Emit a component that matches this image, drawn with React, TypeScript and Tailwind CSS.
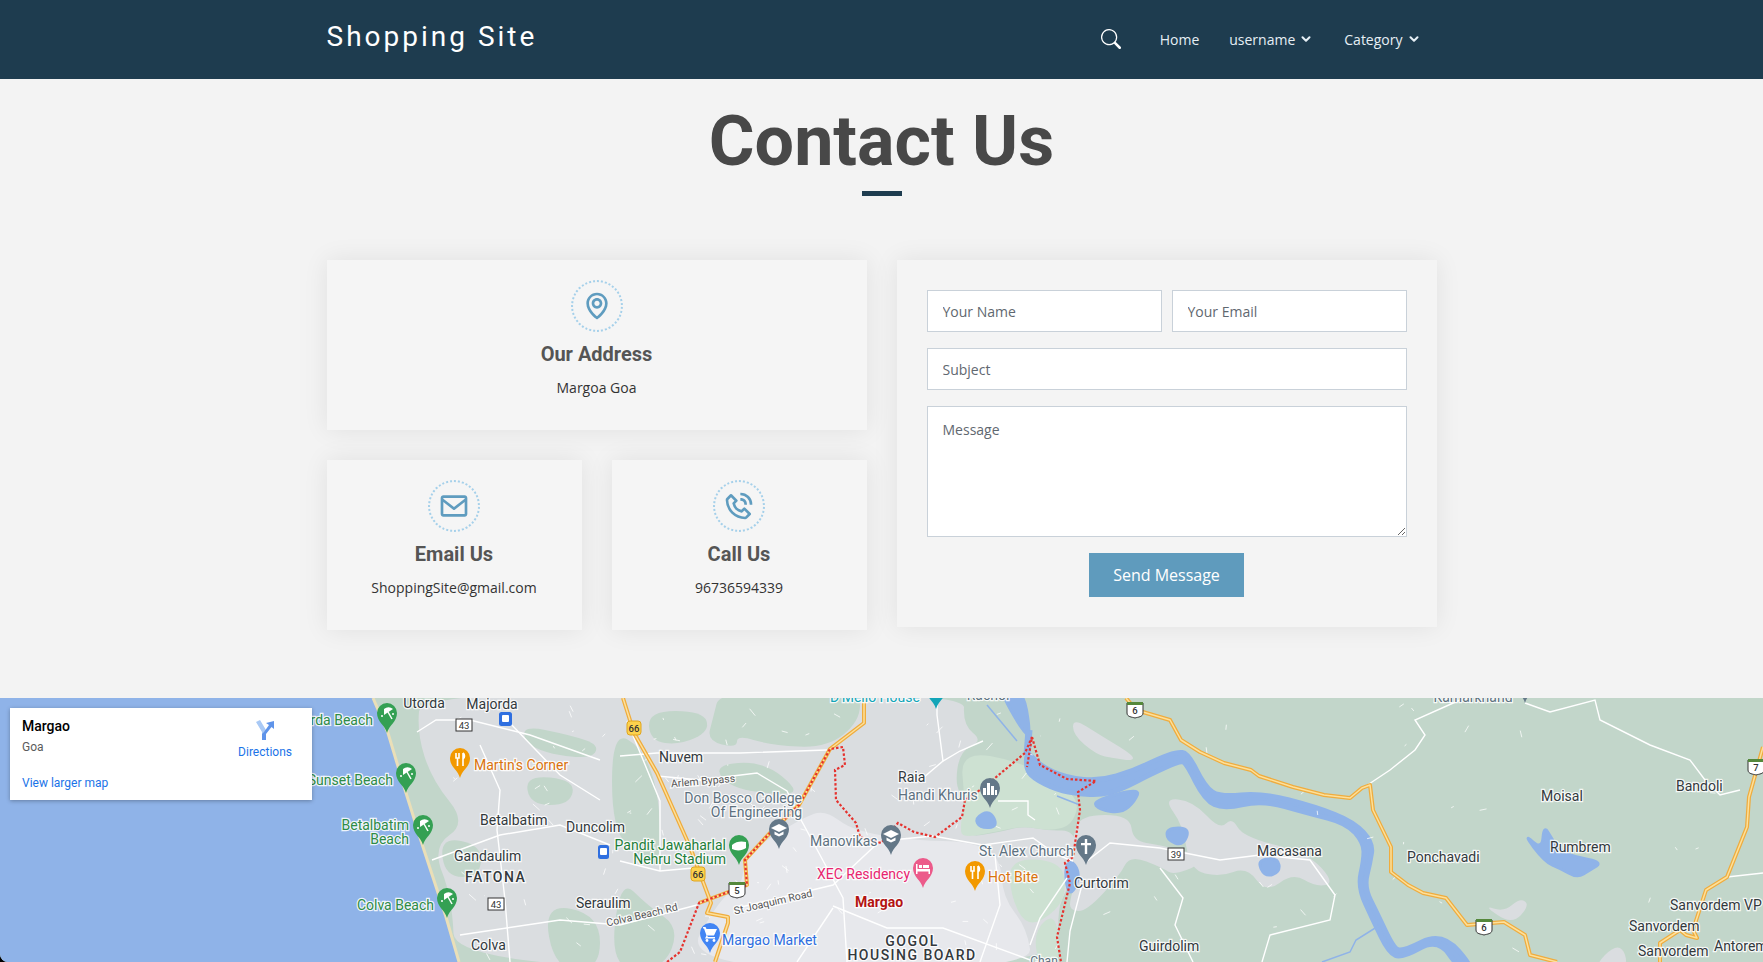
import { ChevronDown } from "lucide-react";
import { BiEnvelope, BiMap, BiPhoneCall } from "react-icons/bi";
import { BsSearch } from "react-icons/bs";

const sans = "font-['Open_Sans',sans-serif]";
const roboto = "font-['Roboto',sans-serif]";

const cardShadow = "shadow-[0_0_24px_0_rgba(0,0,0,0.08)]";

function Header() {
  return (
    <header className="h-[79px] bg-[#1e3c4f] text-white">
      <div className="mx-auto flex h-full w-[1110px] items-start justify-between">
        <a className={`${roboto} mt-[17px] text-[28px] leading-[40px] tracking-[3px]`}>Shopping Site</a>
        <nav className={`${sans} mr-[16px] mt-[28px] flex h-[22px] items-center text-[14px] font-medium text-[#e6eff5]`}>
          <BsSearch className="mr-[39px] text-white" size={20} />
          <span className="mr-[30px]">Home</span>
          <span className="mr-[31px] flex items-center gap-[4px]">
            username <ChevronDown size={14} strokeWidth={3.5} />
          </span>
          <span className="flex items-center gap-[4px]">
            Category <ChevronDown size={14} strokeWidth={3.5} />
          </span>
        </nav>
      </div>
    </header>
  );
}

function InfoCard({ icon, title, text }: { icon: React.ReactNode; title: string; text: string }) {
  return (
    <div className={`flex h-[170px] flex-col items-center bg-[#f5f5f5] pt-[20px] ${cardShadow}`}>
      <div className="flex h-[52px] w-[52px] items-center justify-center rounded-full border-2 border-dotted border-[#a5d0ea] text-[#5f9cbf]">
        {icon}
      </div>
      <h3 className={`${roboto} mt-[10px] text-[20px] font-bold leading-[24px] text-[#555]`}>{title}</h3>
      <p className={`${sans} mt-[10px] text-[14px] leading-[24px] text-[#333]`}>{text}</p>
    </div>
  );
}

const inputCls = `${sans} h-[42px] w-full border border-[#c9d1d9] bg-white px-[15px] text-[14px] text-[#495057] placeholder:text-[#5f6870] outline-none`;

function ContactForm() {
  return (
    <form className={`flex h-[367px] flex-col gap-[16px] bg-[#f4f4f4] p-[30px] ${cardShadow}`}>
      <div className="grid grid-cols-2 gap-[10px]">
        <input className={inputCls} placeholder="Your Name" />
        <input className={inputCls} placeholder="Your Email" />
      </div>
      <input className={inputCls} placeholder="Subject" />
      <textarea
        className={`${sans} h-[131px] w-full border border-[#c9d1d9] bg-white px-[15px] py-[12px] text-[14px] leading-[21px] placeholder:text-[#5f6870] outline-none`}
        placeholder="Message"
      />
      <button type="button" className={`${sans} mx-auto h-[44px] w-[155px] bg-[#5f9bbd] text-[16px] font-medium text-white`}>
        Send Message
      </button>
    </form>
  );
}

const GRAY = "#5d7180";
const DARK = "#33393d";
const GREEN = "#2e8b47";
const GREEN2 = "#1e7e3a";
const ORANGE = "#d9730d";

type Label = { x: number; y: number; t: string; c?: string; a?: "start" | "end" | "middle"; s?: number; w?: number; ls?: number; r?: number };

const labels: Label[] = [
  { x: 424, y: 703, t: "Utorda", a: "middle" },
  { x: 492, y: 704, t: "Majorda", a: "middle" },
  { x: 373, y: 720, t: "Utorda Beach", c: GREEN, a: "end" },
  { x: 393, y: 780, t: "Sunset Beach", c: GREEN, a: "end" },
  { x: 409, y: 825, t: "Betalbatim", c: GREEN, a: "end" },
  { x: 409, y: 839, t: "Beach", c: GREEN, a: "end" },
  { x: 434, y: 905, t: "Colva Beach", c: GREEN, a: "end" },
  { x: 474, y: 765, t: "Martin's Corner", c: ORANGE },
  { x: 480, y: 820, t: "Betalbatim" },
  { x: 566, y: 827, t: "Duncolim" },
  { x: 454, y: 856, t: "Gandaulim" },
  { x: 465, y: 877, t: "FATONA", w: 500, ls: 1.5 },
  { x: 576, y: 903, t: "Seraulim" },
  { x: 471, y: 945, t: "Colva" },
  { x: 659, y: 757, t: "Nuvem" },
  { x: 703, y: 781, t: "Arlem Bypass", a: "middle", s: 10.5, r: -5, c: "#555" },
  { x: 802, y: 798, t: "Don Bosco College", c: GRAY, a: "end" },
  { x: 802, y: 812, t: "Of Engineering", c: GRAY, a: "end" },
  { x: 726, y: 845, t: "Pandit Jawaharlal", c: GREEN2, a: "end" },
  { x: 726, y: 859, t: "Nehru Stadium", c: GREEN2, a: "end" },
  { x: 810, y: 841, t: "Manovikas", c: GRAY },
  { x: 898, y: 777, t: "Raia" },
  { x: 898, y: 795, t: "Handi Khuris", c: GRAY },
  { x: 979, y: 851, t: "St. Alex Church", c: GRAY },
  { x: 1074, y: 883, t: "Curtorim" },
  { x: 817, y: 874, t: "XEC Residency", c: "#e8256f" },
  { x: 988, y: 877, t: "Hot Bite", c: ORANGE },
  { x: 855, y: 902, t: "Margao", c: "#b31412", w: 700 },
  { x: 912, y: 941, t: "GOGOL", a: "middle", w: 500, ls: 1.5 },
  { x: 912, y: 955, t: "HOUSING BOARD", a: "middle", w: 500, ls: 1.5 },
  { x: 722, y: 940, t: "Margao Market", c: "#2f6fe0" },
  { x: 773, y: 902, t: "St Joaquim Road", a: "middle", s: 10.5, r: -13, c: "#555" },
  { x: 642, y: 915, t: "Colva Beach Rd", a: "middle", s: 10.5, r: -13, c: "#555" },
  { x: 1139, y: 946, t: "Guirdolim" },
  { x: 875, y: 697, t: "D'Mello House", c: "#12a5b8", a: "middle" },
  { x: 988, y: 695, t: "Rachol", a: "middle", c: GRAY },
  { x: 1473, y: 697, t: "Kamarkhand", a: "middle", c: GRAY },
  { x: 1044, y: 961, t: "Chan", a: "middle", s: 12, c: GRAY },
  { x: 1257, y: 851, t: "Macasana" },
  { x: 1407, y: 857, t: "Ponchavadi" },
  { x: 1541, y: 796, t: "Moisal" },
  { x: 1550, y: 847, t: "Rumbrem" },
  { x: 1676, y: 786, t: "Bandoli" },
  { x: 1670, y: 905, t: "Sanvordem VP" },
  { x: 1629, y: 926, t: "Sanvordem" },
  { x: 1638, y: 951, t: "Sanvordem" },
  { x: 1714, y: 946, t: "Antorem" },
];

// closed organic outline: each point pulls a quadratic curve through the midpoints
function blob(pts: number[][]) {
  const mid = (a: number[], b: number[]) => `${(a[0] + b[0]) / 2} ${(a[1] + b[1]) / 2}`;
  let d = `M${mid(pts[pts.length - 1], pts[0])}`;
  pts.forEach((p, i) => {
    d += `Q${p[0]} ${p[1]} ${mid(p, pts[(i + 1) % pts.length])}`;
  });
  return `${d}Z`;
}

const highways = [
  "M623 698L634 733L657 773L690 847L711 903L707 913L728 917L728 923L715 962",
  "M864 698L864 723L830 749L799 805L768 835L745 860L747 885L699 903",
  "M1126 698L1136 710L1170 720L1181 740L1200 752L1224 763L1251 770L1259 776L1293 787L1324 795L1350 798L1362 788L1370 785L1373 810L1391 847L1391 872L1408 885L1423 893L1446 898L1467 925L1504 922L1525 935L1530 955L1557 962",
  "M1763 747L1749 797L1747 827L1727 877L1706 890L1693 930L1697 938L1686 935L1680 930L1660 943L1660 962",
];

const redLines = [
  "M667 962L680 952L699 903L747 885L745 860L768 835L799 805L830 749L843 747L845 765L835 770L836 800L856 823L860 837L881 843L898 823L914 832L935 837L962 817L965 800L983 788L1025 753L1032 737L1027 767",
  "M1032 737L1040 765L1067 779L1096 781L1078 792L1080 810L1073 857L1065 863L1070 883L1057 937L1061 962",
];

const roads = [
  "M417 732L436 720L470 720L530 735L600 760",
  "M506 719L560 775L600 800",
  "M480 745L500 790L497 830L505 900L510 962",
  "M432 860L500 835L560 825L610 845",
  "M460 935L560 920L620 925L697 905",
  "M627 721L660 801L660 871",
  "M620 756L657 753L740 753L827 750",
  "M657 776L700 780L757 773L787 791L800 818L820 855L843 898L847 962",
  "M620 861L660 871L693 868",
  "M880 841L833 885L737 908",
  "M833 906L887 928L943 928L1033 961",
  "M833 908L797 962",
  "M937 698L937 715L943 761L960 751L983 741",
  "M923 778L943 761",
  "M881 841L933 836L983 845L1033 838L1057 855L1073 861",
  "M1087 861L1110 843L1160 848L1220 860L1260 855L1310 860L1335 895L1330 920L1270 935L1262 962",
  "M1160 868L1183 898L1175 925L1193 962",
  "M1067 878L1040 918L1030 945",
  "M1082 885L1070 931L1067 962",
  "M998 801L1028 801L1028 815L1035 820",
  "M995 855L1000 905L980 962",
  "M1360 790L1390 770L1415 750L1425 735L1415 720L1460 700",
  "M1525 703L1550 712L1595 700L1600 720L1650 745L1690 760L1705 780L1720 795L1740 790",
  "M1727 877L1763 873",
];

// short stubs of side streets
const stubs: number[][] = [];
let seed = 17;
const rnd = () => {
  seed = (seed * 1103 + 12345) % 65536;
  return seed / 65536;
};
for (let i = 0; i < 150; i++) {
  const east = i % 5 === 0;
  stubs.push([
    east ? 1100 + rnd() * 640 : 440 + rnd() * 620,
    705 + rnd() * 250,
    (rnd() - 0.5) * 14,
    (rnd() - 0.5) * 14,
  ]);
}

type PinT = { x: number; y: number; c: string; g: "beach" | "food" | "school" | "stadium" | "city" | "cross" | "bed" | "cart" | "none" };

const pins: PinT[] = [
  { x: 387, y: 733, c: "#34a053", g: "beach" },
  { x: 406, y: 793, c: "#34a053", g: "beach" },
  { x: 423, y: 845, c: "#34a053", g: "beach" },
  { x: 447, y: 918, c: "#34a053", g: "beach" },
  { x: 460, y: 778, c: "#f29900", g: "food" },
  { x: 779, y: 849, c: "#647888", g: "school" },
  { x: 891, y: 855, c: "#647888", g: "school" },
  { x: 739, y: 865, c: "#34a053", g: "stadium" },
  { x: 990, y: 808, c: "#647888", g: "city" },
  { x: 1086, y: 865, c: "#647888", g: "cross" },
  { x: 923, y: 888, c: "#ec5a8a", g: "bed" },
  { x: 975, y: 891, c: "#f29900", g: "food" },
  { x: 710, y: 953, c: "#4285f4", g: "cart" },
  { x: 936, y: 709, c: "#12a5b8", g: "none" },
  { x: 1525, y: 703, c: "#647888", g: "none" },
];

function PinGlyph({ g }: { g: PinT["g"] }) {
  if (g === "beach")
    return (
      <g stroke="#fff" fill="none" strokeWidth="1.5">
        <path d="M-3 -18L6 -24A7 7 0 0 0 -3 -24Z" fill="#fff" stroke="none" />
        <path d="M1 -21L5 -14" />
        <circle cx="-5" cy="-17" r="1" fill="#fff" stroke="none" />
        <circle cx="6" cy="-19" r="1" fill="#fff" stroke="none" />
      </g>
    );
  if (g === "food")
    return (
      <g stroke="#fff" fill="none" strokeWidth="1.6">
        <path d="M-4 -25V-20H-1V-25M-2.5 -20V-12" />
        <path d="M3 -25V-12M3 -25C5 -24 5 -20 3 -19" />
      </g>
    );
  if (g === "school")
    return (
      <g fill="#fff">
        <path d="M0 -25L8 -21L0 -17L-8 -21Z" />
        <path d="M-4.5 -17.5L0 -15L4.5 -17.5V-14.5L0 -12.5L-4.5 -14.5Z" />
      </g>
    );
  if (g === "stadium")
    return <path d="M-7 -20C-3 -24 3 -24 7 -23V-17C3 -14 -3 -14 -7 -16Z" fill="#fff" />;
  if (g === "city")
    return <path d="M-7 -13V-20H-4V-13ZM-3 -13V-25H0V-13ZM1 -13V-22H4V-13ZM5 -13V-18H7V-13Z" fill="#fff" />;
  if (g === "cross") return <path d="M-1.2 -26H1.2V-22H5V-19.8H1.2V-11H-1.2V-19.8H-5V-22H-1.2Z" fill="#fff" />;
  if (g === "bed")
    return (
      <g fill="#fff">
        <path d="M-7 -24H-5.5V-19H7V-14H5.5V-16.5H-5.5V-14H-7Z" />
        <rect x="-4" y="-23" width="3" height="3" />
        <rect x="0" y="-23" width="6" height="3" />
      </g>
    );
  if (g === "cart")
    return (
      <g fill="#fff">
        <path d="M-7 -26H-4.5L-3.5 -24H7L4 -17.5H-3L-2 -16H5V-14.5H-5L-3.5 -17.5L-6 -24.5H-7Z" />
        <circle cx="-3" cy="-12.5" r="1.4" />
        <circle cx="4" cy="-12.5" r="1.4" />
      </g>
    );
  return null;
}

function Shield({ x, y, t, kind }: { x: number; y: number; t: string; kind: "nh" | "sh" | "us" }) {
  if (kind === "sh")
    return (
      <g>
        <rect x={x - 8} y={y - 6} width="16" height="12" fill="#fff" stroke="#333" />
        <text x={x} y={y + 3.5} textAnchor="middle" fontSize="9.5" fill="#333">{t}</text>
      </g>
    );
  if (kind === "nh")
    return (
      <g>
        <rect x={x - 7} y={y - 7} width="14" height="14" rx="3" fill="#fdd24d" stroke="#e0a520" />
        <text x={x} y={y + 3.5} textAnchor="middle" fontSize="9.5" fontWeight="500" fill="#333">{t}</text>
      </g>
    );
  return (
    <g>
      <path d={`M${x - 8} ${y - 7}H${x + 8}V${y + 3}C${x + 8} ${y + 7} ${x + 3} ${y + 7} ${x} ${y + 8}C${x - 3} ${y + 7} ${x - 8} ${y + 7} ${x - 8} ${y + 3}Z`} fill="#fff" stroke="#333" />
      <rect x={x - 8} y={y - 8} width="16" height="3" fill="#55883b" />
      <text x={x} y={y + 4} textAnchor="middle" fontSize="9.5" fontWeight="500" fill="#333">{t}</text>
    </g>
  );
}

const townAreas = [
  [[421, 690], [417, 733], [432, 780], [467, 823], [432, 847], [452, 897], [455, 970], [1060, 970], [1057, 911], [1067, 888], [1083, 861], [1073, 830], [1050, 831], [1023, 826], [1000, 832], [963, 838], [965, 800], [955, 785], [960, 751], [983, 741], [963, 725], [965, 690]],
  [[1080, 815], [1130, 815], [1133, 841], [1160, 845], [1200, 855], [1200, 865], [1173, 875], [1163, 868], [1130, 855], [1120, 875], [1087, 911], [1070, 911], [1070, 898], [1080, 871], [1067, 861], [1073, 838]],
  [[1073, 718], [1100, 735], [1133, 755], [1133, 761], [1113, 758], [1097, 755], [1073, 735]],
  [[1163, 798], [1193, 801], [1220, 830], [1232, 817], [1243, 837], [1308, 853], [1335, 883], [1316, 887], [1293, 873], [1266, 893], [1247, 867], [1220, 877], [1190, 870], [1183, 825]],
  [[1483, 905], [1512, 925], [1530, 905], [1520, 898], [1504, 912]],
  [[1590, 970], [1620, 940], [1630, 970]],
];

const greenPatches = [
  [[720, 690], [860, 690], [860, 721], [827, 748], [770, 745], [737, 735], [737, 748], [707, 741], [713, 718]],
  [[648, 711], [703, 711], [710, 731], [680, 745], [650, 741]],
  [[713, 765], [763, 761], [800, 791], [780, 795], [730, 788]],
  [[612, 731], [643, 748], [660, 798], [660, 871], [640, 855], [612, 831]],
  [[620, 878], [647, 905], [680, 928], [663, 970], [610, 970]],
  [[520, 725], [570, 735], [600, 745], [590, 760], [530, 750]],
  [[525, 775], [575, 780], [570, 805], [530, 805]],
  [[440, 837], [482, 845], [480, 877], [445, 877]],
  [[543, 903], [600, 915], [600, 970], [555, 970]],
];

const lightGreen = [
  [[960, 751], [1020, 761], [1080, 795], [1073, 825], [1050, 831], [1023, 826], [1000, 831], [963, 838], [960, 828], [965, 800]],
  [[1010, 858], [1060, 861], [1067, 888], [1057, 911], [1027, 928], [1010, 895]],
  [[1033, 931], [1057, 911], [1060, 970], [1040, 970]],
];

const cityCore = [[743, 855], [807, 815], [827, 811], [853, 831], [920, 841], [967, 841], [1000, 855], [1003, 898], [1027, 928], [1033, 970], [680, 970], [720, 898], [743, 885]];

const river = [
  [1027, 751], [1040, 766], [1067, 778], [1100, 781], [1133, 771], [1160, 758], [1177, 752], [1188, 753], [1205, 787], [1220, 797], [1262, 793], [1316, 807], [1354, 822], [1373, 843], [1370, 863], [1364, 887], [1377, 913], [1393, 947], [1402, 952], [1442, 932], [1475, 970],
  [1460, 970], [1438, 938], [1402, 958], [1389, 953], [1373, 920], [1358, 887], [1364, 860], [1364, 843], [1347, 823], [1308, 813], [1262, 800], [1224, 809], [1205, 800], [1186, 763], [1180, 761], [1153, 773], [1120, 790], [1100, 795], [1080, 794], [1057, 790], [1033, 778], [1026, 768],
];

const lakes = [
  [[1000, 690], [1023, 690], [1030, 730], [1027, 736], [1015, 718]],
  [[975, 818], [990, 810], [998, 827], [980, 828]],
  [[1092, 801], [1140, 788], [1135, 801], [1122, 813], [1100, 810]],
  [[1167, 828], [1190, 828], [1183, 846], [1167, 840]],
  [[1065, 865], [1073, 861], [1080, 875], [1073, 893], [1067, 891]],
  [[1257, 860], [1278, 858], [1280, 872], [1265, 877]],
  [[1523, 833], [1542, 850], [1544, 825], [1552, 840], [1565, 855], [1603, 862], [1590, 870], [1577, 878], [1560, 868], [1545, 862]],
];

function MapArt() {
  return (
    <svg className="absolute inset-0 h-full w-full" viewBox="0 698 1763 264" preserveAspectRatio="none" fontFamily="Roboto, sans-serif">
      <rect x="0" y="698" width="1763" height="264" fill="#c2d6ca" />

      <g fill="#dadde0">
        {townAreas.map((p, i) => (
          <path key={i} d={blob(p)} />
        ))}
      </g>
      <g fill="#c2d6ca">
        {greenPatches.map((p, i) => (
          <path key={i} d={blob(p)} />
        ))}
      </g>
      <path d={blob(cityCore)} fill="#e7e8ec" />
      <g fill="#cde1d2">
        {lightGreen.map((p, i) => (
          <path key={i} d={blob(p)} />
        ))}
      </g>

      {/* sea, coast and rivers */}
      <path d="M0 698H373L388 733L406 793L423 847L446 917L459 962H0Z" fill="#8fb3e8" />
      <path d="M373 698L388 733L406 793L423 847L446 917L459 962" fill="none" stroke="#eadfb8" strokeWidth="3" />
      <path d={blob(river)} fill="#8fb3e8" stroke="#8fb3e8" strokeWidth="5" strokeLinejoin="round" />
      <g fill="#8fb3e8" stroke="#8fb3e8" strokeWidth="3" strokeLinejoin="round">
        {lakes.map((p, i) => (
          <path key={i} d={blob(p)} />
        ))}
      </g>
      <g fill="none" stroke="#8fb3e8">
        <path d="M1029 730L1027 755" strokeWidth="7" />
        <path d="M987 705L1017 741" strokeWidth="1.5" />
        <path d="M1057 796L1080 805" strokeWidth="1.5" />
        <path d="M1380 925L1356 940L1350 952L1322 962" strokeWidth="1.5" />
      </g>

      <g fill="none" stroke="#fff" strokeWidth="1.4">
        {roads.map((d) => (
          <path key={d} d={d} />
        ))}
      </g>
      <g fill="none" stroke="#fff" strokeOpacity="0.75" strokeWidth="1">
        {stubs.map((s, i) => (
          <path key={i} d={`M${s[0]} ${s[1]}l${s[2]} ${s[3]}`} />
        ))}
      </g>

      <g fill="none" strokeLinejoin="round">
        {highways.map((d) => (
          <path key={d} d={d} stroke="#efac3e" strokeWidth="4" />
        ))}
        {highways.map((d) => (
          <path key={`${d}-in`} d={d} stroke="#fde09a" strokeWidth="1.5" />
        ))}
      </g>

      <g fill="none" stroke="#e5322e" strokeWidth="2.2" strokeDasharray="2.5 2">
        {redLines.map((d) => (
          <path key={d} d={d} />
        ))}
      </g>

      <Shield x={464} y={725} t="43" kind="sh" />
      <Shield x={496} y={904} t="43" kind="sh" />
      <Shield x={1176} y={854} t="39" kind="sh" />
      <Shield x={634} y={728} t="66" kind="nh" />
      <Shield x={698} y={874} t="66" kind="nh" />
      <Shield x={737} y={890} t="5" kind="us" />
      <Shield x={1135} y={710} t="6" kind="us" />
      <Shield x={1484} y={927} t="6" kind="us" />
      <Shield x={1756} y={767} t="7" kind="us" />

      <g>
        <rect x="499" y="712" width="13" height="14" rx="2.5" fill="#2f6fe0" />
        <rect x="502" y="715" width="7" height="7" rx="1" fill="#fff" />
        <rect x="598" y="845" width="11" height="14" rx="2.5" fill="#2f6fe0" />
        <rect x="600" y="848" width="7" height="7" rx="1" fill="#fff" />
      </g>

      {labels.map((l) => (
        <text
          key={`${l.t}-${l.x}`}
          x={l.x}
          y={l.y}
          textAnchor={l.a ?? "start"}
          dominantBaseline="central"
          fontSize={l.s ?? 14}
          fontWeight={l.w ?? 400}
          letterSpacing={l.ls ?? 0}
          fill={l.c ?? DARK}
          stroke="#fff"
          strokeOpacity="0.85"
          strokeWidth="2.5"
          paintOrder="stroke"
          transform={l.r ? `rotate(${l.r} ${l.x} ${l.y})` : undefined}
        >
          {l.t}
        </text>
      ))}

      {pins.map((p) => (
        <g key={`${p.x}-${p.y}`} transform={`translate(${p.x} ${p.y})`}>
          <path d="M0 0C-2 -8 -10 -11 -10 -20A10 10 0 1 1 10 -20C10 -11 2 -8 0 0Z" fill={p.c} />
          <PinGlyph g={p.g} />
        </g>
      ))}
    </svg>
  );
}

function MapCard() {
  return (
    <div className={`${roboto} absolute left-[10px] top-[10px] flex h-[92px] w-[302px] justify-between bg-white pl-[12px] pr-[20px] shadow-[0_1px_4px_rgba(0,0,0,0.3)]`}>
      <div className="flex flex-col pt-[9px]">
        <div className="text-[14px] font-medium leading-[18px] text-black">Margao</div>
        <div className="mt-[3px] text-[12px] leading-[18px] text-[#5b5b5b]">Goa</div>
        <a className="mt-[19px] text-[12px] leading-[16px] text-[#1a73e8]">View larger map</a>
      </div>
      <div className="flex flex-col items-center pt-[12px]">
        <svg width="20" height="20" viewBox="0 0 20 20">
          <path d="M1 2L5 0L11 10V20H7V12Z" fill="#a9c9f5" />
          <path d="M9 12L14 5L11 3L19 1V9L16.5 7L11 14V20H7V14Z" fill="#5f94ea" />
        </svg>
        <span className="mt-[4px] text-[12px] leading-[16px] text-[#1a73e8]">Directions</span>
      </div>
    </div>
  );
}

export default function App() {
  return (
    <div className="h-[962px] w-full overflow-hidden bg-black">
      <Header />
      <main className="h-[619px] bg-[#f3f3f3] pt-[20px]">
        <div className="flex flex-col items-center">
          <h2 className={`${roboto} text-[70px] font-bold leading-[84px] text-[#484848]`}>Contact Us</h2>
          <div className="mt-[8px] h-[5px] w-[40px] bg-[#1e3c4f]" />
        </div>
        <div className="mx-auto mt-[64px] grid w-[1110px] grid-cols-2 gap-[30px]">
          <div className="flex flex-col gap-[30px]">
            <InfoCard icon={<BiMap size={32} />} title="Our Address" text="Margoa Goa" />
            <div className="grid grid-cols-2 gap-[30px]">
              <InfoCard icon={<BiEnvelope size={32} />} title="Email Us" text="ShoppingSite@gmail.com" />
              <InfoCard icon={<BiPhoneCall size={32} />} title="Call Us" text="96736594339" />
            </div>
          </div>
          <ContactForm />
        </div>
      </main>
      <section className="relative h-[264px] overflow-hidden rounded-bl-[8px]">
        <MapArt />
        <MapCard />
      </section>
    </div>
  );
}
